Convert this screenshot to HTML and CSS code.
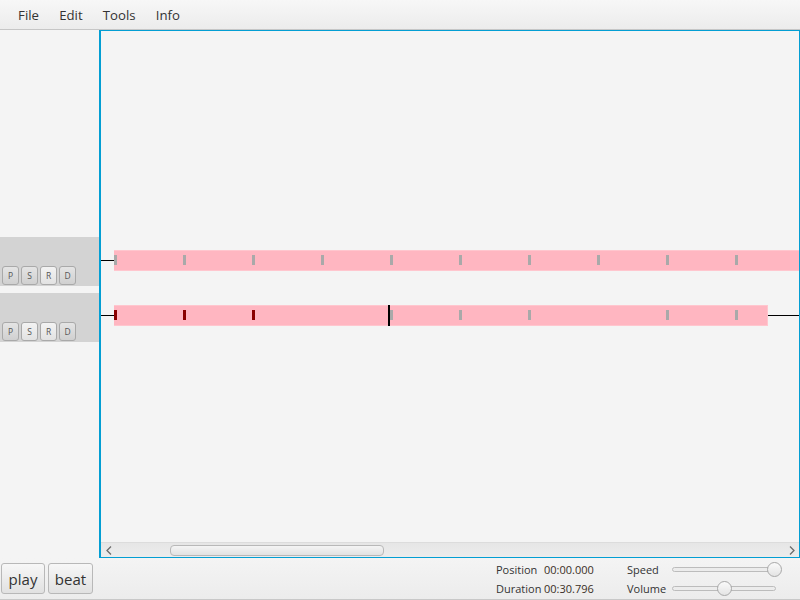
FILE: index.html
```html
<!DOCTYPE html>
<html>
<head>
<meta charset="utf-8">
<link rel="stylesheet" href="styles.css">
</head>
<body>
<div class="app">
  <div class="menubar">
    <span class="menu">File</span>
    <span class="menu">Edit</span>
    <span class="menu">Tools</span>
    <span class="menu">Info</span>
  </div>
  <div class="main">
    <div class="side">
      <div class="thead">
        <div class="tbtns"><span class="tb">P</span><span class="tb">S</span><span class="tb light">R</span><span class="tb">D</span></div>
      </div>
      <div class="thead">
        <div class="tbtns"><span class="tb">P</span><span class="tb light">S</span><span class="tb light">R</span><span class="tb">D</span></div>
      </div>
    </div>
    <div class="pane">
      <div class="canvas">
        <div class="track">
          <span class="lead"></span>
          <div class="bar wide">
            <span class="slot"><i class="tick"></i></span><span class="slot"><i class="tick"></i></span><span class="slot"><i class="tick"></i></span><span class="slot"><i class="tick"></i></span><span class="slot"><i class="tick"></i></span><span class="slot"><i class="tick"></i></span><span class="slot"><i class="tick"></i></span><span class="slot"><i class="tick"></i></span><span class="slot"><i class="tick"></i></span><span class="slot"><i class="tick"></i></span><span class="slot"><i class="tick"></i></span>
          </div>
        </div>
        <div class="track">
          <span class="lead"></span>
          <div class="bar short">
            <span class="slot"><i class="tick red"></i></span><span class="slot"><i class="tick red"></i></span><span class="slot"><i class="tick red"></i></span><span class="slot"></span><span class="slot"><i class="tick"></i></span><span class="slot"><i class="tick"></i></span><span class="slot"><i class="tick"></i></span><span class="slot"></span><span class="slot"><i class="tick"></i></span><span class="slot"><i class="tick"></i></span>
            <span class="cursor"></span>
          </div>
          <span class="tail"></span>
        </div>
      </div>
      <div class="hscroll">
        <span class="arrow">
          <svg width="6" height="9" viewBox="0 0 6 9"><path d="M5 0.5 L1 4.5 L5 8.5" fill="none" stroke="#6b6b6b" stroke-width="1.3"/></svg>
        </span>
        <div class="strack"><div class="thumb"></div></div>
        <span class="arrow">
          <svg width="6" height="9" viewBox="0 0 6 9"><path d="M1 0.5 L5 4.5 L1 8.5" fill="none" stroke="#6b6b6b" stroke-width="1.3"/></svg>
        </span>
      </div>
    </div>
  </div>
  <div class="bottom">
    <button class="btn b-play">play</button>
    <button class="btn b-beat">beat</button>
    <div class="spacer"></div>
    <div class="info">
      <div class="irow"><span class="ilabel">Position</span><span class="ival">00:00.000</span></div>
      <div class="irow"><span class="ilabel">Duration</span><span class="ival">00:30.796</span></div>
    </div>
    <div class="sliders">
      <div class="srow"><span class="slabel">Speed</span><div class="slider"><span class="knob k-speed"></span></div></div>
      <div class="srow"><span class="slabel">Volume</span><div class="slider"><span class="knob k-vol"></span></div></div>
    </div>
  </div>
</div>
</body>
</html>
```
FILE: styles.css
```css
* { box-sizing: border-box; }
html, body { margin: 0; padding: 0; }
body {
  width: 800px;
  height: 600px;
  overflow: hidden;
  font-family: "Open Sans", "Noto Sans", "DejaVu Sans", sans-serif;
  color: #333;
  background: #f4f4f4;
}
.app { display: flex; flex-direction: column; width: 800px; height: 600px; }

.menubar {
  height: 30px;
  flex: none;
  display: flex;
  align-items: center;
  padding-left: 8px;
  padding-top: 1px;
  background: linear-gradient(#f7f7f7, #ececec);
  border-bottom: 1px solid #c6c6c6;
  font-size: 13.2px;
}
.menu { padding: 0 10.1px; line-height: 28px; }

.main { flex: 1; display: flex; min-height: 0; }
.side { width: 99px; flex: none; padding-top: 207px; display: flex; flex-direction: column; gap: 7px; }
.thead {
  height: 49px;
  background: #d3d3d3;
  display: flex;
  align-items: flex-end;
  padding: 0 0 1px 2px;
}
.tbtns { display: flex; gap: 2px; }
.tb {
  width: 17px;
  height: 19px;
  border: 1px solid #a9a9a9;
  border-radius: 3px;
  background: linear-gradient(#e4e4e4, #d0d0d0);
  font-size: 8.5px;
  color: #555;
  display: flex;
  align-items: center;
  justify-content: center;
}
.tb.light { background: linear-gradient(#f3f3f3, #e2e2e2); }

.pane {
  flex: 1;
  border: 1px solid #039ed3;
  border-left-width: 2px;
  display: flex;
  flex-direction: column;
  overflow: hidden;
  background: #f4f4f4;
}
.canvas {
  flex: 1;
  overflow: hidden;
  padding-top: 219px;
  display: flex;
  flex-direction: column;
  gap: 35px;
}
.track { display: flex; align-items: center; height: 20px; }
.lead { width: 13px; height: 1px; background: #000; flex: none; }
.tail { width: 40px; height: 1px; background: #000; flex: none; }
.bar {
  height: 21px;
  background: #ffb6c1;
  border: 1px solid #ffc6ce;
  border-left: none;
  display: flex;
  align-items: center;
  flex: none;
  position: relative;
}
.bar.wide { width: 900px; }
.bar.short { width: 654px; }
.slot { width: 69px; flex: none; display: flex; align-items: center; height: 10px; }
.tick { display: block; width: 3px; height: 10px; background: #a9a9a9; }
.tick.red { background: #8b0000; }
.cursor {
  position: absolute;
  left: 274px;
  top: -1px;
  width: 2px;
  height: 21px;
  background: #000;
}

.hscroll {
  height: 15px;
  flex: none;
  display: flex;
  align-items: center;
  background: linear-gradient(#e6e6e6, #ececec);
  border-top: 1px solid #dcdcdc;
}
.arrow { width: 15px; display: flex; justify-content: center; align-items: center; flex: none; }
.strack { flex: 1; height: 13px; display: flex; align-items: center; padding-left: 54px; }
.thumb {
  width: 214px;
  height: 11px;
  border: 1px solid #b8b8b8;
  border-radius: 4px;
  background: linear-gradient(#f4f4f4, #e2e2e2);
}

.bottom {
  height: 42px;
  flex: none;
  display: flex;
  align-items: center;
  padding: 0 0 1px 1px;
  gap: 3px;
  background: linear-gradient(#f4f4f4, #ececec);
  border-bottom: 1px solid #c8c8c8;
}
.btn {
  height: 31px;
  padding: 2px 0 0;
  border: 1px solid #b8b8b8;
  border-radius: 3px;
  background: linear-gradient(#f7f7f7, #e1e1e1);
  font-family: inherit;
  font-size: 15px;
  color: #333;
}
.b-play { width: 44px; }
.b-beat { width: 45px; }
.spacer { flex: 1; }
.info { display: flex; flex-direction: column; gap: 4px; font-size: 11px; width: 128px; padding-top: 2px; }
.irow { display: flex; }
.ilabel { width: 48px; }
.ival { color: #3a2f26; }
.sliders { display: flex; flex-direction: column; gap: 4px; font-size: 11px; width: 173px; padding-top: 2px; }
.srow { display: flex; align-items: center; height: 15px; }
.slabel { width: 45px; }
.slider {
  position: relative;
  width: 104px;
  height: 5px;
  border: 1px solid #bcbcbc;
  border-radius: 3px;
  background: #ececec;
}
.knob {
  position: absolute;
  top: -6px;
  width: 15px;
  height: 15px;
  border-radius: 50%;
  border: 1px solid #a8a8a8;
  background: linear-gradient(#fafafa, #e4e4e4);
}
.k-speed { left: 94px; }
.k-vol { left: 44px; }
```
